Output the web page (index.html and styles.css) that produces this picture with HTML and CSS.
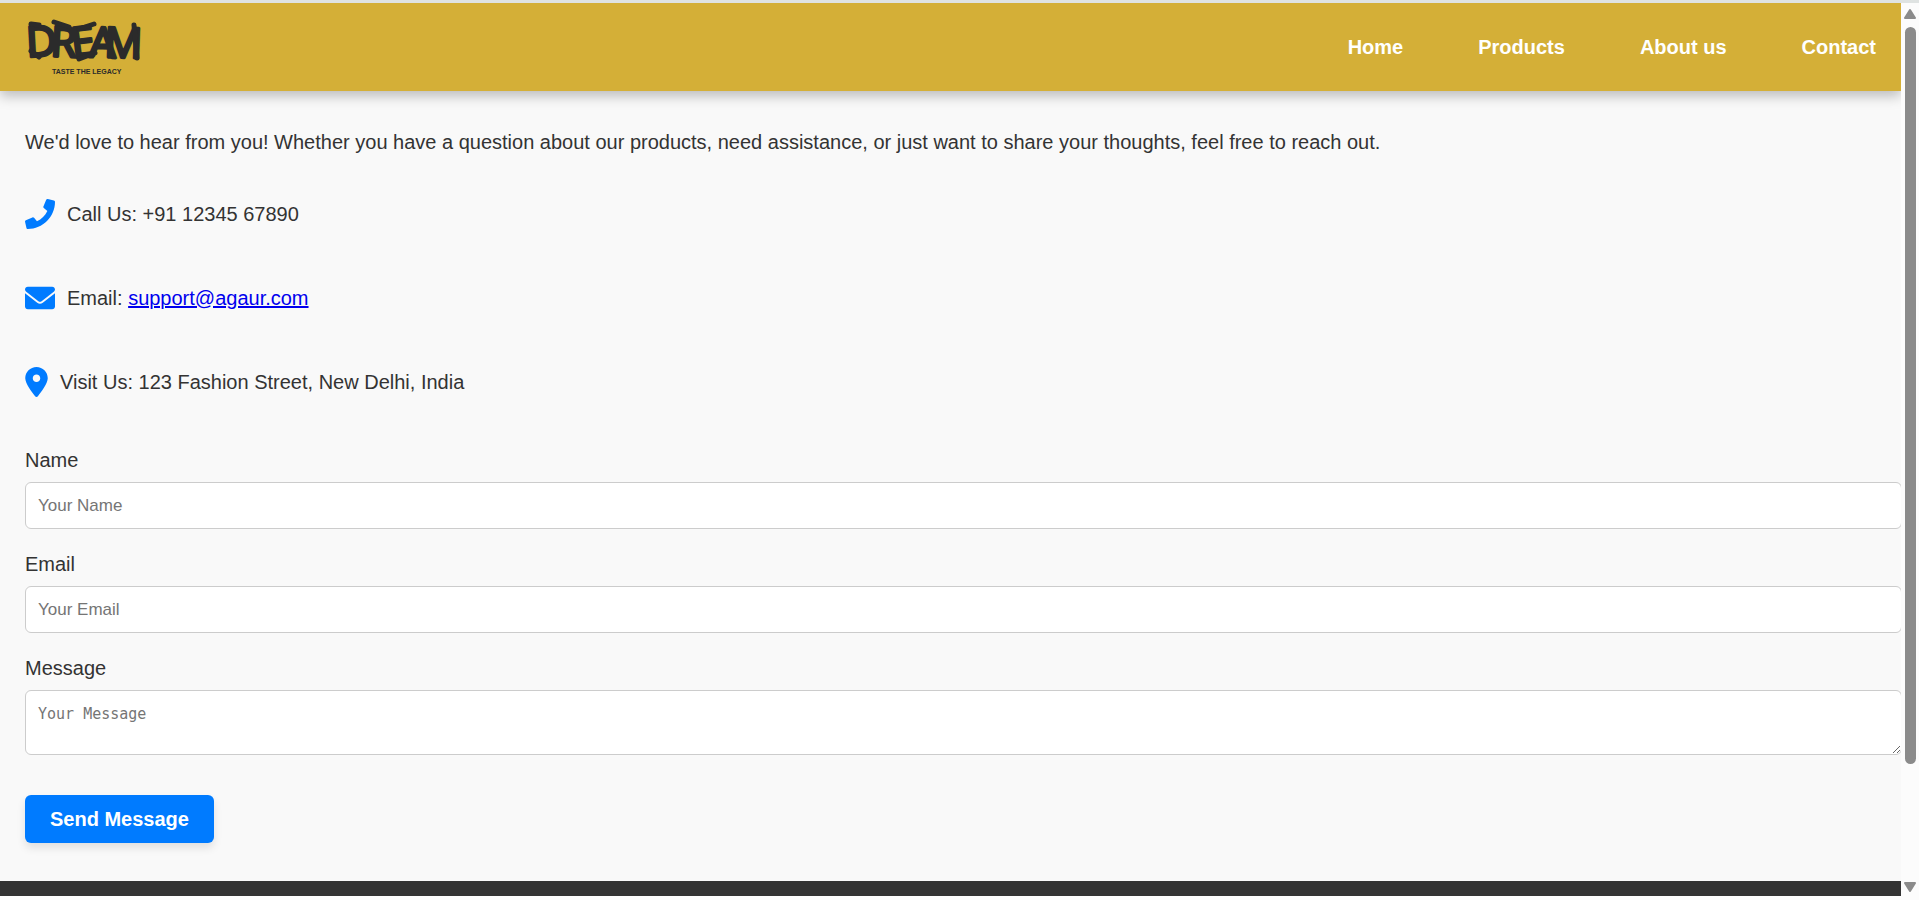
FILE: index.html
```html
<!DOCTYPE html>
<html lang="en">
<head>
<meta charset="utf-8">
<title>Contact</title>
<link rel="stylesheet" href="styles.css">
</head>
<body>
<div class="window">
  <div class="page">
    <header class="header">
      <a class="logo" href="#" aria-label="Dream, taste the legacy">
        <svg width="120" height="64" viewBox="25 15 120 64">
          <text class="logo-word" x="27 50 73 89 104" y="57 56 58 57 57" rotate="-3 3 -7 2 2">DREAM</text>
          <g class="logo-brush">
            <path d="M31 51l8 6"/>
            <path d="M31 24l8 1"/>
            <path d="M54 22l15 5"/>
            <path d="M79 29l15-5"/>
            <path d="M79 59l16-6"/>
            <path d="M134 25l3 33"/>
          </g>
          <text class="logo-tag" x="52" y="74">TASTE THE LEGACY</text>
        </svg>
      </a>
      <nav class="nav">
        <a href="#">Home</a>
        <a href="#">Products</a>
        <a href="#">About us</a>
        <a href="#">Contact</a>
      </nav>
    </header>

    <main class="contact">
      <p class="intro">We'd love to hear from you! Whether you have a question about our products, need assistance, or just want to share your thoughts, feel free to reach out.</p>

      <div class="details">
        <div class="detail">
          <svg class="icon" viewBox="0 0 512 512" width="30" height="30"><path d="M493.4 24.6l-104-24c-11.3-2.6-22.9 3.3-27.5 13.9l-48 112c-4.2 9.8-1.4 21.3 6.9 28l60.6 49.6c-36 76.7-98.9 140.5-177.2 177.2l-49.6-60.6c-6.8-8.3-18.2-11.1-28-6.9l-112 48C3.9 366.5-2 378.1.6 389.4l24 104C27.1 504.2 36.7 512 48 512c256.1 0 464-207.5 464-464 0-11.2-7.7-20.9-18.6-23.4z"/></svg>
          <p>Call Us: +91 12345 67890</p>
        </div>
        <div class="detail">
          <svg class="icon" viewBox="0 0 512 512" width="30" height="30"><path d="M256 352c-16.53 0-33.06-5.422-47.16-16.41L0 173.2V400C0 426.5 21.49 448 48 448h416c26.51 0 48-21.49 48-48V173.2l-208.8 162.5C289.1 346.6 272.5 352 256 352zM16.29 145.3l212.2 165.1c16.19 12.6 38.87 12.6 55.06 0l212.2-165.1C505.1 137.3 512 125 512 112C512 85.49 490.5 64 464 64h-416C21.49 64 0 85.49 0 112C0 125 6.01 137.3 16.29 145.3z"/></svg>
          <p>Email: <a href="mailto:support@agaur.com">support@agaur.com</a></p>
        </div>
        <div class="detail">
          <svg class="icon" viewBox="0 0 384 512" width="23" height="30"><path d="M168.3 499.2C116.1 435 0 279.4 0 192C0 85.96 85.96 0 192 0C298 0 384 85.96 384 192C384 279.4 267 435 215.7 499.2C203.4 514.5 180.6 514.5 168.3 499.2zM192 256C227.3 256 256 227.3 256 192C256 156.7 227.3 128 192 128C156.7 128 128 156.7 128 192C128 227.3 156.7 256 192 256z"/></svg>
          <p>Visit Us: 123 Fashion Street, New Delhi, India</p>
        </div>
      </div>

      <form class="form">
        <div class="field">
          <label for="name">Name</label>
          <input id="name" type="text" placeholder="Your Name">
        </div>
        <div class="field">
          <label for="email">Email</label>
          <input id="email" type="email" placeholder="Your Email">
        </div>
        <div class="field">
          <label for="message">Message</label>
          <textarea id="message" rows="2" placeholder="Your Message"></textarea>
        </div>
        <button class="send" type="submit">Send Message</button>
      </form>
    </main>

    <footer class="footer"></footer>
  </div>

  <div class="scrollbar" aria-hidden="true">
    <svg width="14" height="10" viewBox="0 0 14 10"><path d="M7 1L12 9H2z"/></svg>
    <div class="track"><div class="thumb"></div></div>
    <svg width="14" height="10" viewBox="0 0 14 10"><path d="M7 9L12 1H2z"/></svg>
  </div>
</div>
</body>
</html>
```
FILE: styles.css
```css
* {
  box-sizing: border-box;
}

body {
  margin: 0;
  background: #fcfcfc;
  color: #333;
  font: 20px/23px "Liberation Sans", Arial, sans-serif;
}

p {
  margin: 0;
}

.window {
  display: flex;
  min-height: 100vh;
  border-top: 3px solid #dfe3e2;
  border-bottom: 4px solid #fcfcfc;
}

.page {
  flex: 1;
  min-width: 0;
  display: flex;
  flex-direction: column;
  overflow: hidden;
  background: #f9f9f9;
}

.header {
  display: flex;
  align-items: center;
  justify-content: space-between;
  padding: 12px 25px;
  background: #d4af37;
  box-shadow: 0 5px 12px rgba(0, 0, 0, 0.25);
}

.logo svg {
  display: block;
  overflow: visible;
}

.logo-word {
  font: 42px "Open Sans", "Noto Sans", sans-serif;
  fill: #2b2b2b;
  stroke: #2b2b2b;
  stroke-width: 3px;
  stroke-linejoin: round;
}

.logo-brush {
  fill: none;
  stroke: #2b2b2b;
  stroke-width: 5px;
  stroke-linecap: round;
}

.logo-tag {
  font: bold 7px "Liberation Sans", Arial, sans-serif;
  fill: #2b2b2b;
}

.nav {
  display: flex;
  gap: 75px;
}

.nav a {
  color: #fff;
  font-weight: bold;
  text-decoration: none;
}

.contact {
  padding: 40px 0 38px 25px;
}

.details {
  display: flex;
  flex-direction: column;
  gap: 54px;
  margin: 45px 0 52px;
}

.detail {
  display: flex;
  align-items: center;
  gap: 12px;
}

.detail a {
  color: #0000ee;
}

.icon {
  fill: #007bff;
}

.form {
  display: flex;
  flex-direction: column;
  gap: 24px;
  margin-right: -1px;
}

.field {
  display: flex;
  flex-direction: column;
  gap: 10px;
}

.field input,
.field textarea {
  width: 100%;
  padding: 12px;
  border: 1px solid #ccc;
  border-radius: 6px;
  background: #fff;
  color: #333;
  font: 17px/21px "Liberation Sans", Arial, sans-serif;
}

.field textarea {
  height: 65px;
  font: 15px/22px Consolas, "DejaVu Sans Mono", monospace;
}

.field input::placeholder,
.field textarea::placeholder {
  color: #757575;
}

.send {
  align-self: flex-start;
  margin-top: 16px;
  padding: 12px 25px;
  border: 0;
  border-radius: 6px;
  background: #007bff;
  box-shadow: 0 5px 8px rgba(0, 0, 0, 0.1);
  color: #fff;
  font: bold 20px/24px "Liberation Sans", Arial, sans-serif;
}

.footer {
  flex: 1;
  min-height: 15px;
  background: #333;
}

.scrollbar {
  display: flex;
  flex-direction: column;
  align-items: center;
  gap: 8px;
  width: 18px;
  padding: 6px 0 4px;
  background: #fcfcfc;
}

.scrollbar svg {
  fill: #8b8b8b;
  stroke: #8b8b8b;
  stroke-width: 2px;
  stroke-linejoin: round;
}

.track {
  flex: 1;
}

.thumb {
  width: 11px;
  height: 87%;
  border-radius: 6px;
  background: #8b8b8b;
}
```
